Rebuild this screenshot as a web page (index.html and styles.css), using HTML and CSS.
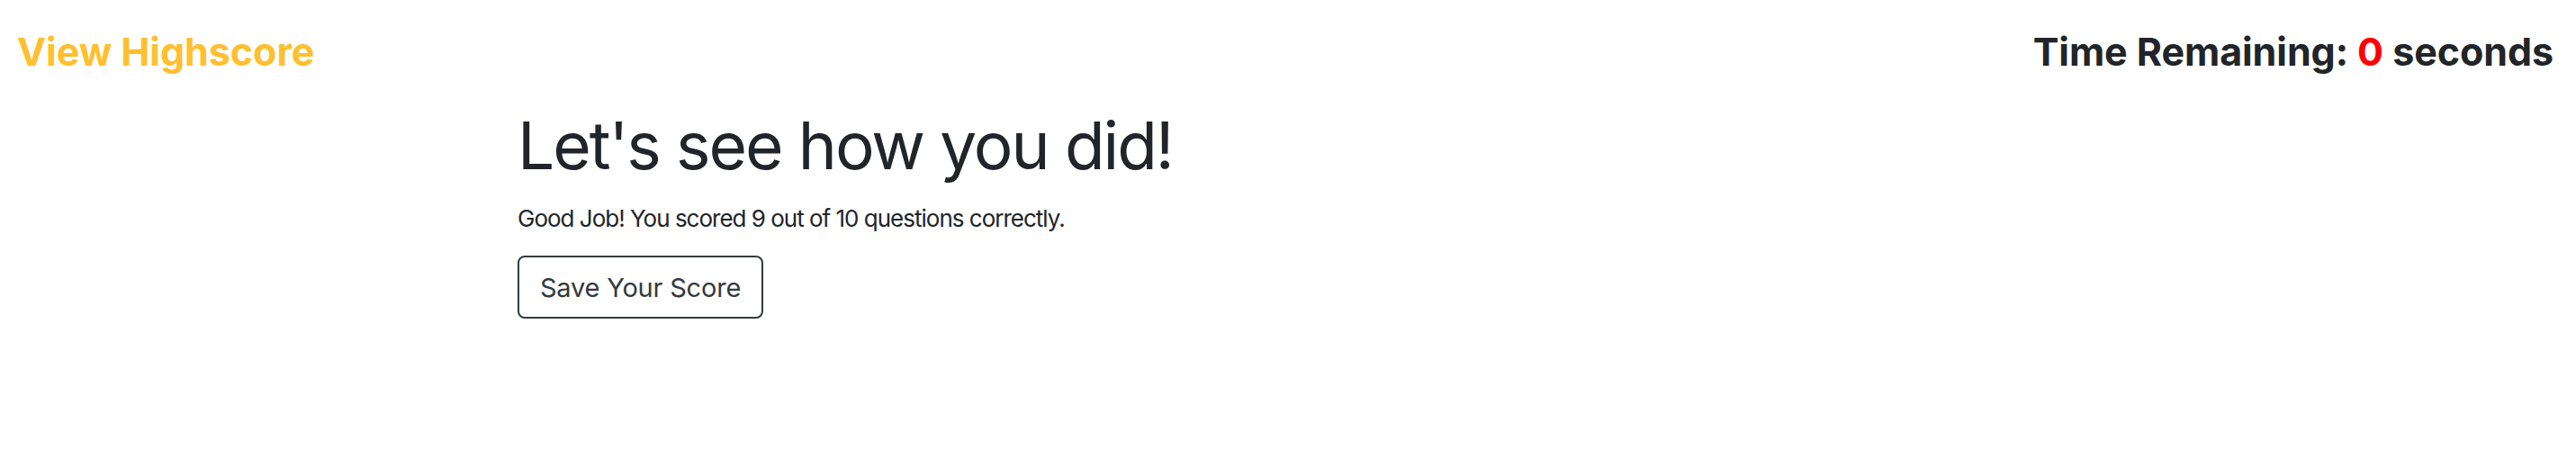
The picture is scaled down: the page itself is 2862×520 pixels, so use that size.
FILE: index.html
```html
<!DOCTYPE html>
<html lang="en">
<head>
<meta charset="utf-8">
<title>Quiz Results</title>
<link rel="stylesheet" href="styles.css">
</head>
<body>
<header class="topbar">
  <a class="highscore-link" href="#">View Highscore</a>
  <div class="timer">Time Remaining: <span class="time-left">0</span> seconds</div>
</header>
<main class="results">
  <h1 class="results-title">Let's see how you did!</h1>
  <p class="results-text">Good Job! You scored 9 out of 10 questions correctly.</p>
  <button class="save-btn" type="button">Save Your Score</button>
</main>
</body>
</html>
```
FILE: styles.css
```css
html, body {
  margin: 0;
  padding: 0;
  background: #ffffff;
}
body {
  font-family: Inter, "Noto Sans", "Liberation Sans", sans-serif;
  color: #212529;
  width: 2862px;
  height: 520px;
}
.topbar {
  display: flex;
  justify-content: space-between;
  align-items: center;
  padding: 32px 25px 0 19px;
}
.highscore-link {
  color: #ffbf2f;
  font-weight: 700;
  font-size: 43px;
  line-height: 1.2;
  letter-spacing: -0.05px;
  text-decoration: none;
}
.timer {
  font-weight: 700;
  font-size: 43px;
  line-height: 1.2;
  letter-spacing: -0.07px;
  color: #212529;
}
.time-left {
  color: #ff0000;
}
.results {
  display: flex;
  flex-direction: column;
  align-items: flex-start;
  padding-left: 575px;
  padding-top: 34px;
}
.results-title {
  margin: 0;
  font-weight: 400;
  font-size: 73px;
  line-height: 1.2;
  letter-spacing: -2.1px;
}
.results-text {
  margin: 18px 0 0 0;
  font-size: 26px;
  line-height: 1.5;
  letter-spacing: -1px;
}
.save-btn {
  margin-top: 22px;
  width: 273px;
  height: 70px;
  background: #ffffff;
  border: 2px solid #343a40;
  border-radius: 8px;
  color: #343a40;
  font-family: inherit;
  font-size: 29px;
  letter-spacing: -0.2px;
  padding: 0;
}
```
